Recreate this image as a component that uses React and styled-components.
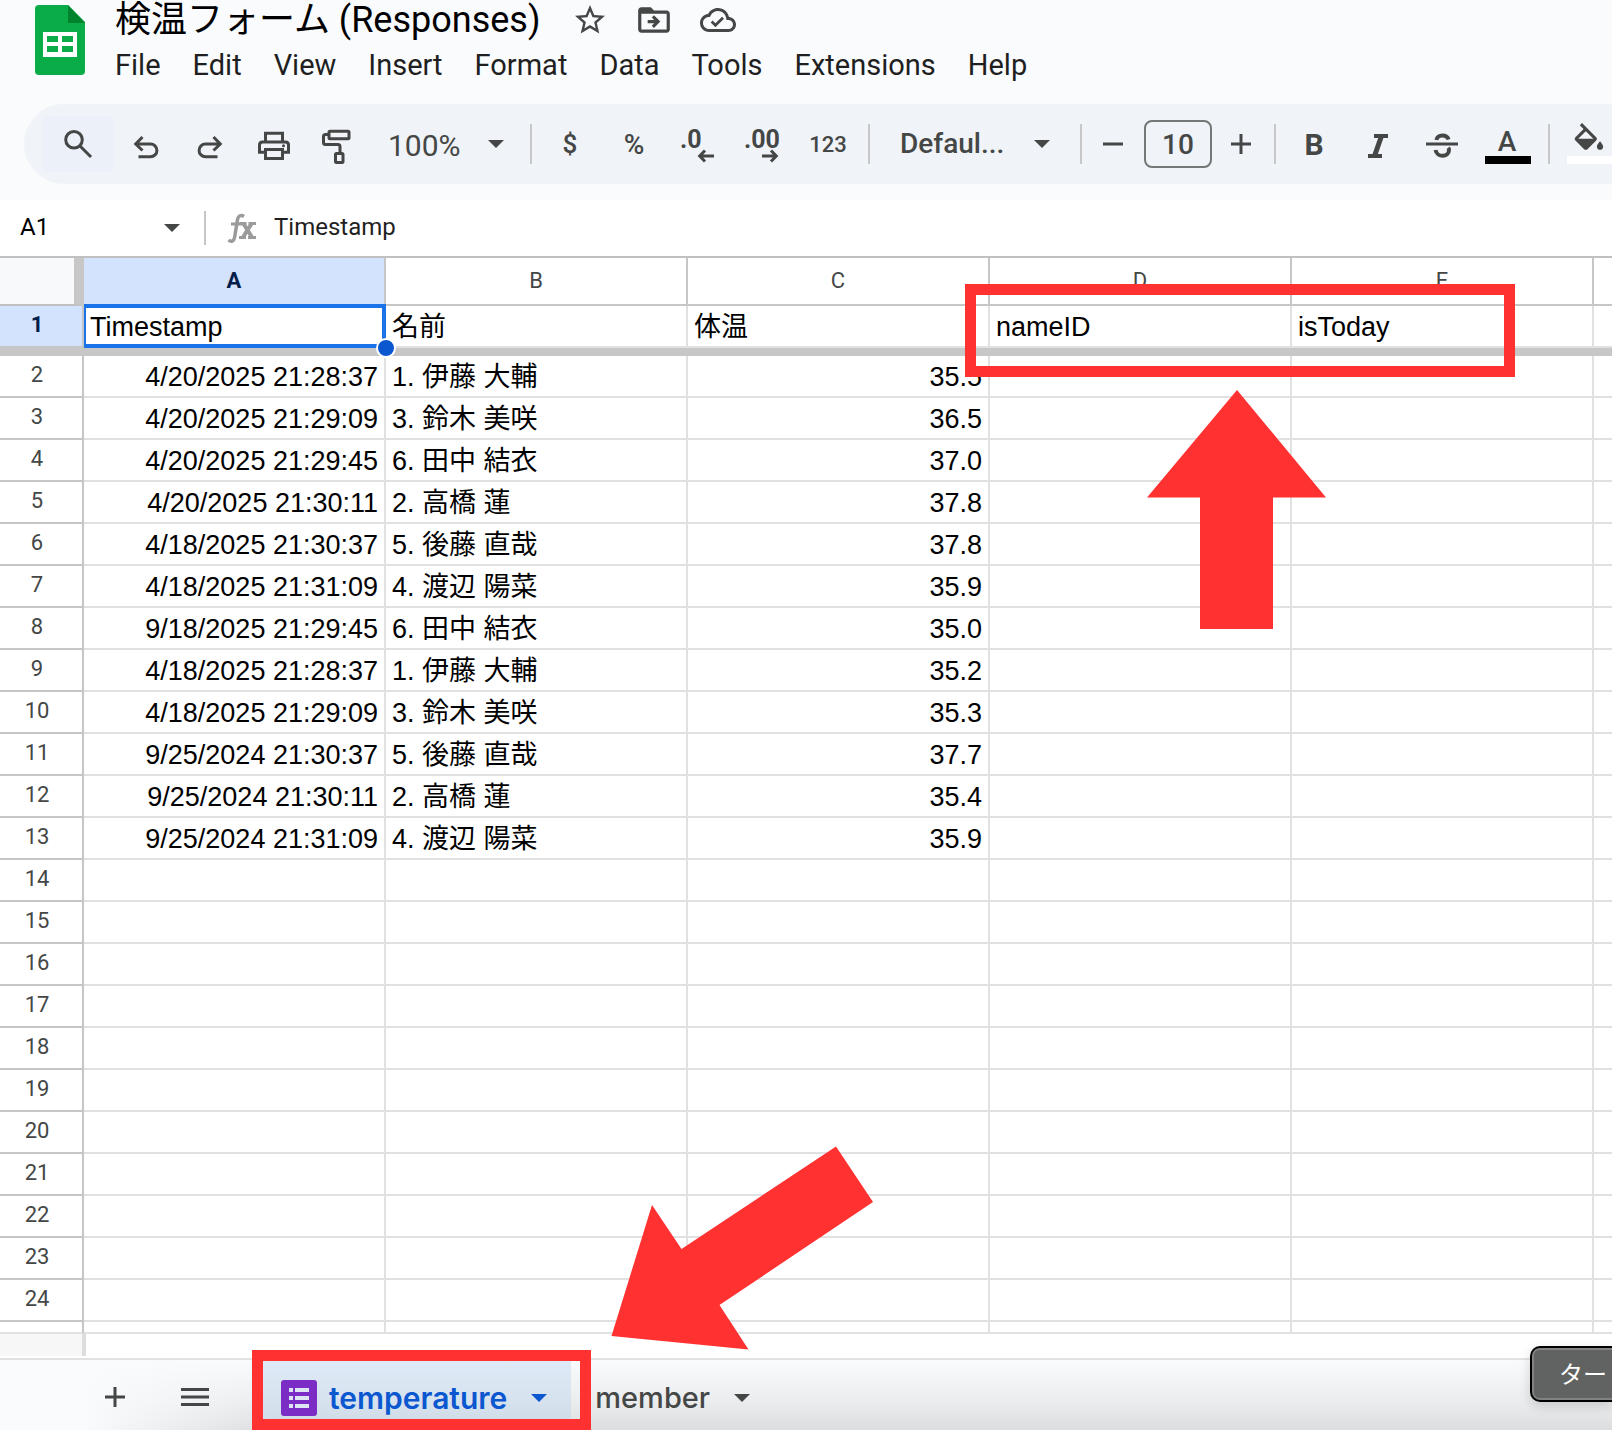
import styled, { createGlobalStyle } from "styled-components";

const GlobalStyle = createGlobalStyle`
  *, *::after {
    box-sizing: border-box;
  }
  body {
    margin: 0;
    background: #ffffff;
    font-family: Roboto, "Noto Sans CJK JP", sans-serif;
    color: #1f1f1f;
  }
  button, input, select {
    font-family: inherit;
    border: none;
    background: transparent;
    padding: 0;
    margin: 0;
    outline: none;
  }
`;

const Page = styled.div`
  position: relative;
  overflow: hidden;
  background: #f9fbfd;
`;

const Header = styled.header`
  display: flex;
  gap: 30px;
  padding: 0 35px 14px;
`;

const Logo = styled.svg`
  flex: none;
  width: 50px;
  height: 70px;
  margin-top: 5px;
`;

const TitleRow = styled.div`
  display: flex;
  align-items: center;
  height: 40px;
`;

const Title = styled.h1`
  margin: 0 18px 0 0;
  font-size: 36px;
  font-weight: 400;
  line-height: 40px;
  color: #000000;
  white-space: nowrap;
`;

const TitleButton = styled.button`
  display: flex;
  align-items: center;
  justify-content: center;
  width: 64px;
  height: 40px;
  color: #444746;
`;

const Menu = styled.nav`
  display: flex;
  gap: 32px;
`;

const MenuItem = styled.button`
  font-size: 29px;
  line-height: 50px;
  color: #1f1f1f;
`;

const Toolbar = styled.div`
  display: flex;
  align-items: center;
  height: 80px;
  margin-left: 24px;
  padding-left: 18px;
  overflow: hidden;
  background: #f0f3f8;
  border-radius: 40px 0 0 40px;
`;

const Tool = styled.button`
  flex: none;
  display: flex;
  align-items: center;
  justify-content: center;
  width: ${({ $width }) => $width || 64}px;
  height: 56px;
  border-radius: 4px;
  background: ${({ $tinted }) => ($tinted ? "#ecf0f9" : "transparent")};
  color: #444746;
  font-size: ${({ $size }) => $size || 28}px;
  font-weight: ${({ $bold }) => ($bold ? 700 : 500)};
`;

const ToolIcon = styled.svg`
  width: 40px;
  height: 40px;
  overflow: visible;
  fill: none;
  stroke: currentColor;
  stroke-width: 3;

  text {
    fill: currentColor;
    stroke: none;
    font-weight: ${({ $medium }) => ($medium ? 500 : 700)};
  }
`;

const Divider = styled.div`
  flex: none;
  width: 2px;
  height: ${({ $height }) => $height || 40}px;
  margin: 0 6px;
  background: #c7c7c7;
`;

const SelectWrap = styled.label`
  flex: none;
  display: flex;
  align-items: center;
  width: ${({ $width }) => $width}px;
  padding: 0 ${({ $end }) => $end}px 0 ${({ $indent }) => $indent}px;
  color: #444746;
`;

const Select = styled.select`
  appearance: none;
  flex: 1;
  min-width: 0;
  padding-top: ${({ $low }) => ($low ? 4 : 0)}px;
  font-size: ${({ $size }) => $size || 28}px;
  font-weight: ${({ $size }) => ($size ? 400 : 500)};
  line-height: 40px;
  color: #444746;
`;

const SizeInput = styled.input`
  flex: none;
  width: 68px;
  height: 48px;
  margin: 0 4px;
  border: 2px solid #747775;
  border-radius: 8px;
  font-size: 28px;
  font-weight: 500;
  text-align: center;
  color: #444746;
`;

const FormulaBar = styled.div`
  display: flex;
  align-items: center;
  height: 58px;
  margin-top: 16px;
  padding-left: 20px;
  background: #ffffff;
  border-bottom: 2px solid #c0c0c0;
  color: #444746;
`;

const NameBox = styled.input`
  width: 144px;
  padding-bottom: 2px;
  font-size: 24px;
  color: #000000;
`;

const NameDivider = styled(Divider)`
  margin: 0 20px 0 24px;
`;

const FormulaInput = styled.input`
  flex: 1;
  min-width: 0;
  margin-left: 16px;
  padding-bottom: 2px;
  font-size: 24px;
  color: #1f1f1f;
`;

const Grid = styled.table`
  width: 100%;
  table-layout: fixed;
  border-collapse: separate;
  border-spacing: 0;
  background: #ffffff;

  th:last-child,
  td:last-child {
    border-right: none;
  }
`;

const HeadCol = styled.col`
  width: 84px;
`;

const DataCol = styled.col`
  width: 302px;
`;

const Corner = styled.td`
  padding: 0;
  background: #f8f9fa;
  border-right: 10px solid #c7c7c7;
  border-bottom: 2px solid #c0c0c0;
`;

const ColumnHead = styled.th`
  padding: 0;
  height: 48px;
  border-right: 2px solid #c4c7c5;
  border-bottom: 2px solid #c4c7c5;
  background: ${({ $active }) => ($active ? "#d3e3fd" : "#ffffff")};
  color: ${({ $active }) => ($active ? "#041e49" : "#444746")};
  font-size: 22px;
  font-weight: ${({ $active }) => ($active ? 700 : 400)};
  line-height: 46px;
`;

const RowHead = styled.th`
  padding: 0 8px 2px 0;
  border-right: 2px solid #c4c7c5;
  border-bottom: 2px solid #c4c7c5;
  background: ${({ $active }) => ($active ? "#d3e3fd" : "#ffffff")};
  color: ${({ $active }) => ($active ? "#041e49" : "#444746")};
  font-size: 22px;
  font-weight: ${({ $active }) => ($active ? 700 : 400)};
  line-height: 38px;
`;

const Cell = styled.td`
  position: relative;
  height: 42px;
  padding: 2px 6px 0;
  border-right: 2px solid #e1e1e1;
  border-bottom: 2px solid #e1e1e1;
  font-family: "Liberation Sans", "Noto Sans CJK JP", sans-serif;
  font-size: 27px;
  line-height: 38px;
  text-align: ${({ $right }) => ($right ? "right" : "left")};
  white-space: nowrap;
  color: #000000;
`;

const Selection = styled.div`
  position: absolute;
  z-index: 1;
  inset: -2px -2px -2px 0;
  border: 4px solid #1a73e8;
  border-left-width: 2px;

  &::after {
    content: "";
    position: absolute;
    right: -14px;
    bottom: -14px;
    width: 20px;
    height: 20px;
    border: 2px solid #ffffff;
    border-radius: 50%;
    background: #0b57d0;
  }
`;

const FreezeBar = styled.td`
  height: 8px;
  padding: 0;
  background: #c7c7c7;
`;

const CutCell = styled.td`
  height: 12px;
  padding: 0;
  border-right: 2px solid ${({ $head }) => ($head ? "#c4c7c5" : "#e1e1e1")};
  border-bottom: 2px solid #e1e1e1;
`;

const ScrollTrack = styled.div`
  height: 24px;
  padding-bottom: 2px;
  background: #ffffff;
`;

const ScrollStub = styled.div`
  width: 86px;
  height: 100%;
  background: #f7f7f7;
  border-right: 4px solid #dddddd;
`;

const SheetBar = styled.footer`
  display: flex;
  height: 72px;
  padding-left: 75px;
  border-top: 2px solid #e1e3e1;
  background:
    linear-gradient(to right, #f9fbfd 80px, rgba(249, 251, 253, 0) 280px),
    linear-gradient(#f9fbfd, #ebecee 60%, #dcdddf);
  color: #444746;
`;

const SheetButton = styled.button`
  display: flex;
  align-items: center;
  justify-content: center;
  width: 80px;
  padding-top: 4px;
  color: #444746;
`;

const SheetTab = styled.button`
  display: flex;
  align-items: center;
  gap: 24px;
  padding: 5px 24px 0;
  margin-left: ${({ $active }) => ($active ? 22 : 0)}px;
  background: ${({ $active }) => ($active ? "rgba(185, 210, 240, 0.4)" : "transparent")};
  color: ${({ $active }) => ($active ? "#0b57d0" : "#444746")};
  font-family: Inter, sans-serif;
  font-size: ${({ $active }) => ($active ? 30 : 29)}px;
  font-weight: ${({ $active }) => ($active ? 600 : 500)};
`;

const TabLabel = styled.span`
  display: flex;
  align-items: center;
  gap: 12px;
`;

const Highlight = styled.div`
  position: absolute;
  z-index: 2;
  left: ${({ $x }) => $x}px;
  top: ${({ $y }) => $y}px;
  width: ${({ $w }) => $w}px;
  height: ${({ $h }) => $h}px;
  border: 11px solid #ff3131;
  pointer-events: none;
`;

const Arrows = styled.svg`
  position: absolute;
  z-index: 2;
  left: 0;
  top: 0;
  pointer-events: none;
  fill: #ff3131;
`;

const ImeBubble = styled.div`
  position: absolute;
  z-index: 3;
  right: 0;
  bottom: 28px;
  width: 82px;
  height: 56px;
  padding-left: 27px;
  overflow: hidden;
  border: 2px solid #000000;
  border-right: none;
  border-radius: 10px 0 0 10px;
  background: #616362;
  box-shadow: inset 2px 0 0 #828282, inset 0 2px 0 #828282, inset 0 -2px 0 #828282, 0 4px 12px rgba(0, 0, 0, 0.15);
  color: #ffffff;
  font-family: "Noto Sans CJK JP", sans-serif;
  font-size: 24px;
  line-height: 50px;
  white-space: nowrap;
`;

const Caret = () => (
  <svg width="16" height="8" viewBox="0 0 16 8" fill="currentColor">
    <path d="M0 0h16L8 8z" />
  </svg>
);

const columns = ["A", "B", "C", "D", "E"];

const heading = ["Timestamp", "名前", "体温", "nameID", "isToday"];

const records = [
  ["4/20/2025 21:28:37", "1. 伊藤 大輔", "35.5"],
  ["4/20/2025 21:29:09", "3. 鈴木 美咲", "36.5"],
  ["4/20/2025 21:29:45", "6. 田中 結衣", "37.0"],
  ["4/20/2025 21:30:11", "2. 高橋 蓮", "37.8"],
  ["4/18/2025 21:30:37", "5. 後藤 直哉", "37.8"],
  ["4/18/2025 21:31:09", "4. 渡辺 陽菜", "35.9"],
  ["9/18/2025 21:29:45", "6. 田中 結衣", "35.0"],
  ["4/18/2025 21:28:37", "1. 伊藤 大輔", "35.2"],
  ["4/18/2025 21:29:09", "3. 鈴木 美咲", "35.3"],
  ["9/25/2024 21:30:37", "5. 後藤 直哉", "37.7"],
  ["9/25/2024 21:30:11", "2. 高橋 蓮", "35.4"],
  ["9/25/2024 21:31:09", "4. 渡辺 陽菜", "35.9"],
];

const rows = Array.from({ length: 23 }, (_, i) => records[i] || []);

const menus = ["File", "Edit", "View", "Insert", "Format", "Data", "Tools", "Extensions", "Help"];

const TopBar = () => (
  <Header>
    <Logo viewBox="0 0 50 70">
      <path fill="#0aac47" d="M4 0h29l17 17v49a4 4 0 0 1-4 4H4a4 4 0 0 1-4-4V4a4 4 0 0 1 4-4z" />
      <path fill="#00832d" d="M33 0l17 18H33z" />
      <path
        fill="#ffffff"
        fillRule="evenodd"
        d="M8 27h34v25H8zM12 31v6h11v-6zM27 31v6h11v-6zM12 41v6h11v-6zM27 41v6h11v-6z"
      />
    </Logo>
    <div>
      <TitleRow>
        <Title>検温フォーム (Responses)</Title>
        <TitleButton aria-label="Star">
          <svg width="36" height="36" viewBox="0 0 24 24" fill="currentColor">
            <path d="M22 9.24l-7.19-.62L12 2 9.19 8.63 2 9.24l5.46 4.73L5.82 21 12 17.27 18.18 21l-1.63-7.03L22 9.24zM12 15.4l-3.76 2.27 1-4.28-3.32-2.88 4.38-.38L12 6.1l1.71 4.04 4.38.38-3.32 2.88 1 4.28L12 15.4z" />
          </svg>
        </TitleButton>
        <TitleButton aria-label="Move">
          <svg width="38" height="38" viewBox="0 0 24 24" fill="currentColor">
            <path
              fillRule="evenodd"
              d="M20 6h-8l-2-2H4c-1.1 0-2 .9-2 2v12c0 1.1.9 2 2 2h16c1.1 0 2-.9 2-2V8c0-1.1-.9-2-2-2zm0 12H4V8h16v10z"
            />
            <path d="M12.16 12H8v2h4.16l-1.59 1.59L11.99 17 16 13.01 11.99 9l-1.41 1.41L12.16 12z" />
          </svg>
        </TitleButton>
        <TitleButton aria-label="Saved to Drive">
          <svg width="36" height="36" viewBox="0 0 24 24" fill="currentColor">
            <path d="M19.35 10.04C18.67 6.59 15.64 4 12 4 9.11 4 6.61 5.64 5.36 8.04 2.35 8.36 0 10.9 0 14c0 3.31 2.69 6 6 6h13c2.76 0 5-2.24 5-5 0-2.64-2.05-4.78-4.65-4.96zM19 18H6c-2.21 0-4-1.79-4-4 0-2.05 1.53-3.76 3.56-3.97l1.07-.11.5-.95C8.08 7.14 9.94 6 12 6c2.62 0 4.88 1.86 5.39 4.43l.3 1.5 1.53.11c1.56.1 2.78 1.41 2.78 2.96 0 1.65-1.35 3-3 3z" />
            <path d="M10.3 14.2l-1.9-1.9L7.1 13.6l3.2 3.2 5.7-5.7-1.3-1.3z" />
          </svg>
        </TitleButton>
      </TitleRow>
      <Menu>
        {menus.map((name) => (
          <MenuItem key={name}>{name}</MenuItem>
        ))}
      </Menu>
    </div>
  </Header>
);

const Tools = () => (
  <Toolbar>
    <Tool $width={72} $tinted aria-label="Search the menus">
      <ToolIcon viewBox="0 0 40 40">
        <circle cx="16" cy="15.7" r="8.3" />
        <path d="M22 22l11 11" />
      </ToolIcon>
    </Tool>
    <Tool aria-label="Undo">
      <ToolIcon viewBox="0 0 40 40">
        <path d="M10 20h14.5a6.4 6.4 0 0 1 0 12.8H12.5M16.5 13L9.7 20l6.8 6.5" />
      </ToolIcon>
    </Tool>
    <Tool aria-label="Redo">
      <ToolIcon viewBox="0 0 40 40">
        <path d="M30 20H15.5a6.4 6.4 0 0 0 0 12.8H27.5M23.5 13l6.8 7-6.8 6.5" />
      </ToolIcon>
    </Tool>
    <Tool aria-label="Print">
      <ToolIcon viewBox="0 0 40 40">
        <path d="M11.5 18V9.2h17V18M11.5 28.2h-6V21q0-3 3-3h23q3 0 3 3v7.2h-6M11.5 25.5h17v9h-17z" />
        <circle cx="29.5" cy="21.8" r="1.5" fill="currentColor" stroke="none" />
      </ToolIcon>
    </Tool>
    <Tool aria-label="Paint format">
      <ToolIcon viewBox="0 0 40 40">
        <rect x="11" y="7.2" width="20" height="7.6" rx="1" />
        <path d="M10 10.5H7.5q-2 0-2 2v6q0 2 2 2H20q2 0 2 2V29" />
        <rect x="17.5" y="29.5" width="7.5" height="9" rx="1" />
      </ToolIcon>
    </Tool>
    <SelectWrap $width={154} $indent={18} $end={20}>
      <Select aria-label="Zoom" $size={30} $low>
        <option>100%</option>
      </Select>
      <Caret />
    </SelectWrap>
    <Divider />
    <Tool $size={26}>$</Tool>
    <Tool $size={28}>%</Tool>
    <Tool aria-label="Decrease decimal places">
      <ToolIcon viewBox="0 0 40 40">
        <text x="2" y="24" fontSize="25">.0</text>
        <path d="M36 32H22M27 26.5L21.7 32l5.3 5.5" />
      </ToolIcon>
    </Tool>
    <Tool aria-label="Increase decimal places">
      <ToolIcon viewBox="0 0 40 40">
        <text x="2" y="24" fontSize="25">.00</text>
        <path d="M20 32h14M29 26.5l5.3 5.5-5.3 5.5" />
      </ToolIcon>
    </Tool>
    <Tool $width={68} $size={22}>123</Tool>
    <Divider />
    <SelectWrap $width={198} $indent={24} $end={24}>
      <Select aria-label="Font">
        <option>Defaul...</option>
      </Select>
      <Caret />
    </SelectWrap>
    <Divider />
    <Tool $width={52} aria-label="Decrease font size">
      <ToolIcon viewBox="0 0 40 40">
        <path d="M9 20h20" />
      </ToolIcon>
    </Tool>
    <SizeInput aria-label="Font size" defaultValue="10" />
    <Tool $width={52} aria-label="Increase font size">
      <ToolIcon viewBox="0 0 40 40">
        <path d="M9 20h20M19 10v20" />
      </ToolIcon>
    </Tool>
    <Divider />
    <Tool $bold $size={30}>B</Tool>
    <Tool aria-label="Italic">
      <ToolIcon viewBox="0 0 40 40">
        <path strokeWidth="4" d="M16 12h14M10 32h14" />
        <path strokeWidth="5" d="M23.5 12l-7 20" />
      </ToolIcon>
    </Tool>
    <Tool aria-label="Strikethrough">
      <ToolIcon viewBox="0 0 40 40">
        <path d="M4 20h32" />
        <path strokeWidth="4" d="M14.5 16c.5-6 10.5-6 12-.5M13.5 26c1.5 8 13.5 7.5 13.5 0 0-.8-.2-1.5-.8-2.2" />
      </ToolIcon>
    </Tool>
    <Tool $width={68} aria-label="Text color">
      <ToolIcon viewBox="0 0 40 40" $medium>
        <text x="19" y="27" fontSize="28" textAnchor="middle">A</text>
        <rect x="-3" y="32" width="46" height="8" fill="#000000" stroke="none" />
      </ToolIcon>
    </Tool>
    <Divider />
    <Tool $width={68} aria-label="Fill color">
      <ToolIcon viewBox="0 0 40 40">
        <path
          fill="currentColor"
          stroke="none"
          transform="translate(0 -1) scale(1.58)"
          d="M16.56 8.94L7.62 0 6.21 1.41l2.38 2.38-5.15 5.15c-.59.59-.59 1.54 0 2.12l5.5 5.5c.29.29.68.44 1.06.44s.77-.15 1.06-.44l5.5-5.5c.59-.58.59-1.53 0-2.12zM5.21 10L10 5.21 14.79 10H5.21zM19 11.5s-2 2.17-2 3.5c0 1.1.9 2 2 2s2-.9 2-2c0-1.33-2-3.5-2-3.5z"
        />
        <rect x="-3" y="32" width="46" height="8" fill="#ffffff" stroke="none" />
      </ToolIcon>
    </Tool>
  </Toolbar>
);

const Sheet = () => (
  <Grid>
    <colgroup>
      <HeadCol />
      {columns.map((name) => (
        <DataCol key={name} />
      ))}
      <col />
    </colgroup>
    <thead>
      <tr>
        <Corner />
        {columns.map((name, i) => (
          <ColumnHead key={name} scope="col" $active={i === 0}>
            {name}
          </ColumnHead>
        ))}
        <ColumnHead />
      </tr>
      <tr>
        <RowHead scope="row" $active>1</RowHead>
        {heading.map((text, i) => (
          <Cell key={text}>
            {text}
            {i === 0 && <Selection />}
          </Cell>
        ))}
        <Cell />
      </tr>
      <tr>
        <FreezeBar colSpan={7} />
      </tr>
    </thead>
    <tbody>
      {rows.map((row, i) => (
        <tr key={i}>
          <RowHead scope="row">{i + 2}</RowHead>
          {columns.map((name, c) => (
            <Cell key={name} $right={c !== 1}>
              {row[c]}
            </Cell>
          ))}
          <Cell />
        </tr>
      ))}
      <tr>
        <CutCell $head />
        {columns.map((name) => (
          <CutCell key={name} />
        ))}
        <CutCell />
      </tr>
    </tbody>
  </Grid>
);

const App = () => (
  <>
    <GlobalStyle />
    <Page>
      <TopBar />
      <Tools />
      <FormulaBar>
        <NameBox aria-label="Name box" defaultValue="A1" />
        <Caret />
        <NameDivider $height={34} />
        <svg width="32" height="32" viewBox="0 0 32 32" fill="none" stroke="#9b9b9b" strokeWidth="3">
          <path strokeWidth="3.5" d="M2.5 28c3 2.5 5.500 1 6.200-3L11.500 7.500c.8-4 3.500-5 6.500-3" />
          <path d="M5 12h11" />
          <path strokeWidth="4" d="M17 11l9.500 15M26 11L16.500 26" />
          <path d="M13.500 11.500h7M22.500 11.500H30M13 25.500h7M22 25.500h8" />
        </svg>
        <FormulaInput aria-label="Formula" defaultValue="Timestamp" />
      </FormulaBar>
      <Sheet />
      <ScrollTrack>
        <ScrollStub />
      </ScrollTrack>
      <SheetBar>
        <SheetButton aria-label="Add sheet">
          <svg width="20" height="20" viewBox="0 0 20 20" stroke="currentColor" strokeWidth="3">
            <path d="M0 10h20M10 0v20" />
          </svg>
        </SheetButton>
        <SheetButton aria-label="All sheets">
          <svg width="28" height="18" viewBox="0 0 28 18" stroke="currentColor" strokeWidth="3">
            <path d="M0 1.5h28M0 9h28M0 16.5h28" />
          </svg>
        </SheetButton>
        <SheetTab $active>
          <TabLabel>
            <svg width="36" height="36" viewBox="0 0 36 36">
              <rect width="36" height="36" rx="3" fill="#7b2cc4" />
              <path fill="#dde5f2" d="M8 8h4v4H8zM14 8h14v4H14zM8 16h4v4H8zM14 16h14v4H14zM8 24h4v4H8zM14 24h14v4H14z" />
            </svg>
            temperature
          </TabLabel>
          <Caret />
        </SheetTab>
        <SheetTab>
          member
          <Caret />
        </SheetTab>
      </SheetBar>
      <Highlight $x={965} $y={284} $w={550} $h={93} />
      <Highlight $x={252} $y={1350} $w={339} $h={80} />
      <Arrows width="1612" height="1430" viewBox="0 0 1612 1430">
        <path d="M1237 390l89 107.5h-53V629h-73V497.5h-53z" />
        <path d="M611.5 1336L652 1205l29.5 44L836 1146.5l37 55.5-153.5 103 29 44.5z" />
      </Arrows>
      <ImeBubble>ター</ImeBubble>
    </Page>
  </>
);

export default App;
